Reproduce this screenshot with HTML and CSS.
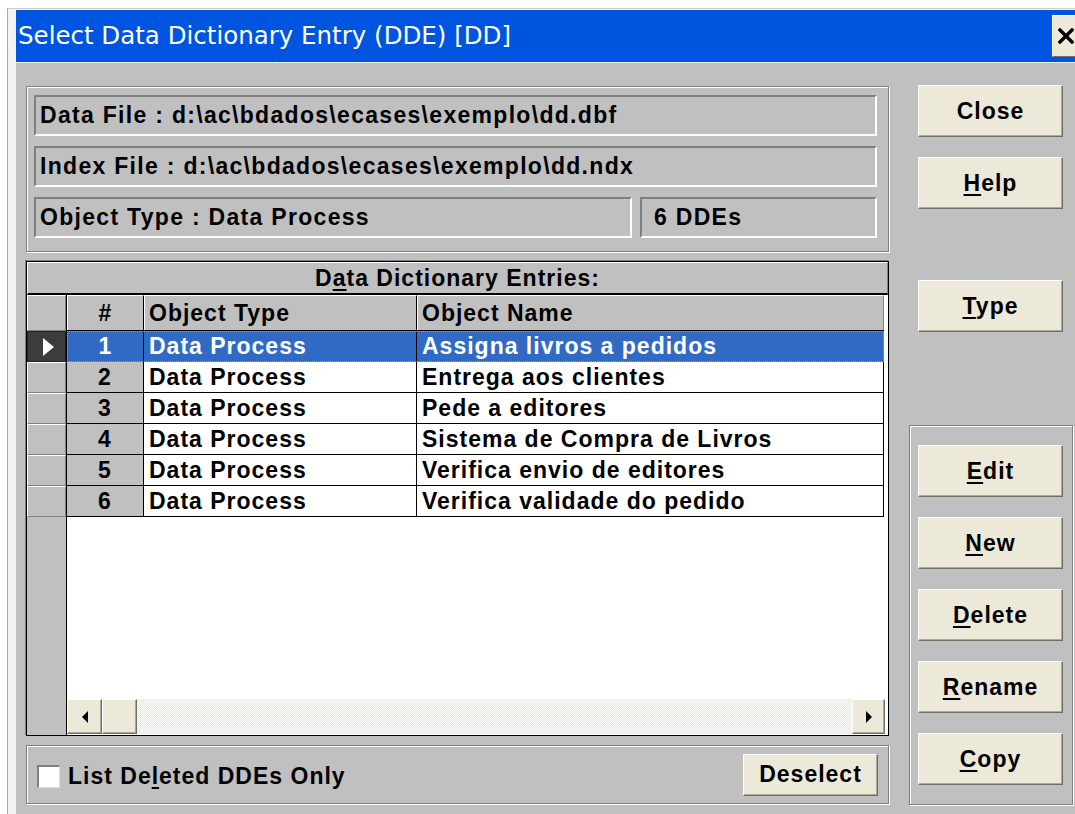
FILE: index.html
```html
<!DOCTYPE html>
<html lang="en">
<head>
<meta charset="utf-8">
<title>Select Data Dictionary Entry (DDE) [DD]</title>
<link rel="stylesheet" href="styles.css">
</head>
<body>
<div class="window">
  <div class="titlebar">
    <span class="title">Select Data Dictionary Entry (DDE) [DD]</span>
    <button class="xbtn" aria-label="Close">
      <svg width="16" height="16" viewBox="0 0 16 16"><path d="M2 2 L14 14 M14 2 L2 14" stroke="#000" stroke-width="3.4" stroke-linecap="square"/></svg>
    </button>
  </div>
  <div class="client">
    <div class="left">
      <div class="group info">
        <div class="field">Data File : d:\ac\bdados\ecases\exemplo\dd.dbf</div>
        <div class="field">Index File : d:\ac\bdados\ecases\exemplo\dd.ndx</div>
        <div class="field-row">
          <div class="field objtype">Object Type : Data Process</div>
          <div class="field count">6 DDEs</div>
        </div>
      </div>

      <div class="grid">
        <div class="caption"><span>D<u>a</u>ta Dictionary Entries:</span></div>
        <div class="gbody">
          <div class="indcol">
            <div class="ind ind-head"></div>
            <div class="ind current"><span class="arrow"></span></div>
            <div class="ind"></div>
            <div class="ind"></div>
            <div class="ind"></div>
            <div class="ind"></div>
            <div class="ind"></div>
          </div>
          <div class="gdata">
            <div class="hrow">
              <div class="hc c-num">#</div>
              <div class="hc c-type">Object Type</div>
              <div class="hc c-name">Object Name</div>
            </div>
            <div class="row selected">
              <div class="c c-num">1</div>
              <div class="c c-type">Data Process</div>
              <div class="c c-name">Assigna livros a pedidos</div>
            </div>
            <div class="row">
              <div class="c c-num">2</div>
              <div class="c c-type">Data Process</div>
              <div class="c c-name">Entrega aos clientes</div>
            </div>
            <div class="row">
              <div class="c c-num">3</div>
              <div class="c c-type">Data Process</div>
              <div class="c c-name">Pede a editores</div>
            </div>
            <div class="row">
              <div class="c c-num">4</div>
              <div class="c c-type">Data Process</div>
              <div class="c c-name">Sistema de Compra de Livros</div>
            </div>
            <div class="row">
              <div class="c c-num">5</div>
              <div class="c c-type">Data Process</div>
              <div class="c c-name">Verifica envio de editores</div>
            </div>
            <div class="row">
              <div class="c c-num">6</div>
              <div class="c c-type">Data Process</div>
              <div class="c c-name">Verifica validade do pedido</div>
            </div>
            <div class="filler"></div>
            <div class="hscroll">
              <div class="sbtn"><span class="tri-left"></span></div>
              <div class="sthumb"></div>
              <div class="strack"></div>
              <div class="sbtn sbtn-r"><span class="tri-right"></span></div>
            </div>
          </div>
        </div>
      </div>

      <div class="group bottom">
        <label class="check"><span class="box"></span><span class="label-text">List De<u>l</u>eted DDEs Only</span></label>
        <button class="btn deselect">Deselect</button>
      </div>
    </div>

    <div class="right">
      <button class="btn side b-close">Close</button>
      <button class="btn side b-help"><span><u>H</u>elp</span></button>
      <button class="btn side b-type"><span><u>T</u>ype</span></button>
      <div class="group actions">
        <button class="btn side"><span><u>E</u>dit</span></button>
        <button class="btn side"><span><u>N</u>ew</span></button>
        <button class="btn side"><span><u>D</u>elete</span></button>
        <button class="btn side"><span><u>R</u>ename</span></button>
        <button class="btn side"><span><u>C</u>opy</span></button>
      </div>
    </div>
  </div>
</div>
</body>
</html>
```

FILE: styles.css
```css
* { box-sizing: border-box; }

html, body {
  margin: 0;
  padding: 0;
  width: 1075px;
  height: 814px;
  overflow: hidden;
  background: #fff;
}

body {
  font-family: "Liberation Sans", Arial, sans-serif;
  font-weight: bold;
  font-size: 23px;
  letter-spacing: 1px;
  color: #000;
}

u { text-decoration-thickness: 2px; text-underline-offset: 3px; }

/* ---- window frame ---- */
.window {
  margin: 8px 0 0 7px;
  width: 1080px;
  height: 806px;
  border-left: 1px solid #a9a9a9;
  border-top: 1px solid #cfcfcf;
  background: #f3f3f3;
  padding: 1px 0 0 8px;
  display: flex;
  flex-direction: column;
}

.titlebar {
  height: 53px;
  background: #0055e0;
  border-bottom: 1px solid #e8eefc;
  display: flex;
  align-items: center;
  padding-left: 2px;
}

.title {
  font-family: "DejaVu Sans", "Liberation Sans", sans-serif;
  font-weight: normal;
  font-size: 24.5px;
  letter-spacing: 0;
  color: #fff;
  margin-top: -1px;
}

.xbtn {
  margin-left: auto;
  margin-right: 5px;
  width: 30px;
  height: 42px;
  background: #ece9d8;
  border: 1px solid #fff;
  border-right-color: #716f64;
  border-bottom-color: #716f64;
  padding: 0 0 0 5px;
  display: flex;
  align-items: center;
  justify-content: flex-start;
}

/* ---- client area ---- */
.client {
  flex: 1;
  background: #c0c0c0;
  display: flex;
  padding: 22px 0 0 10px;
}

.left {
  width: 863px;
  display: flex;
  flex-direction: column;
}

.right {
  margin-left: 20px;
  width: 164px;
  display: flex;
  flex-direction: column;
}

/* etched group frame */
.group {
  border: 1px solid #808080;
  box-shadow: inset 1px 1px 0 #fff, 1px 1px 0 #fff;
}

.info {
  margin-top: 1px;
  height: 166px;
  padding: 8px 11px 0 7px;
  display: flex;
  flex-direction: column;
  gap: 10px;
}

.field {
  height: 41px;
  border-top: 2px solid #808080;
  border-left: 2px solid #808080;
  border-bottom: 2px solid #fff;
  border-right: 2px solid #fff;
  padding-left: 4px;
  display: flex;
  align-items: center;
  white-space: nowrap;
  letter-spacing: 1.3px;
}

.field-row {
  display: flex;
  gap: 8px;
}

.objtype { width: 598px; }
.count { flex: 1; padding-left: 12px; }

/* ---- data grid ---- */
.grid {
  margin-top: 9px;
  height: 475px;
  border: 1px solid #000;
  box-shadow: -1px -1px 0 #808080;
  display: flex;
  flex-direction: column;
  background: #fff;
}

.caption {
  height: 33px;
  background: #c0c0c0;
  border-top: 1px solid #fff;
  border-left: 1px solid #fff;
  border-right: 1px solid #808080;
  border-bottom: 2px solid #000;
  display: flex;
  align-items: center;
  justify-content: center;
  flex-shrink: 0;
}

.gbody {
  flex: 1;
  display: flex;
  min-height: 0;
}

.indcol {
  width: 39px;
  background: #c0c0c0;
  display: flex;
  flex-direction: column;
}

.ind {
  height: 31px;
  border-top: 1px solid #fff;
  border-left: 1px solid #fff;
  border-bottom: 1px solid #808080;
  border-right: 1px solid #808080;
  background: #c0c0c0;
}

.ind-head { height: 36px; }

.ind.current {
  background: #3c3c3c;
  border-color: #202020;
  display: flex;
  align-items: center;
  justify-content: center;
}

.arrow {
  width: 0;
  height: 0;
  border-top: 9px solid transparent;
  border-bottom: 9px solid transparent;
  border-left: 11px solid #fff;
  margin-left: 4px;
}

.gdata {
  flex: 1;
  border-left: 1px solid #000;
  display: flex;
  flex-direction: column;
  background: #fff;
}

.hrow, .row {
  display: flex;
  flex-shrink: 0;
}

.hrow {
  height: 36px;
  border-bottom: 1px solid #000;
  background: #c0c0c0;
  width: 817px;
}

.hc {
  border-top: 1px solid #fff;
  border-left: 1px solid #fff;
  border-right: 1px solid #000;
  display: flex;
  align-items: center;
  padding-left: 4px;
  white-space: nowrap;
}

.row { height: 31px; }

.c {
  border-right: 1px solid #000;
  border-bottom: 1px solid #000;
  display: flex;
  align-items: center;
  padding-left: 5px;
  white-space: nowrap;
}

.c-num { width: 77px; justify-content: center; padding-left: 0; }
.c-type { width: 273px; }
.c-name { width: 467px; }

.hc.c-name { border-right: 1px solid #808080; }

.row .c-num { background: #c0c0c0; }

.row.selected .c {
  background: #316ac5;
  color: #fff;
  border-top: 1px dotted #d09a3c;
  border-bottom: 1px dotted #d09a3c;
}
.row.selected .c-num { border-left: 1px dotted #d09a3c; }
.row.selected .c-name { border-right: 1px dotted #d09a3c; }

.filler { flex: 1; }

.hscroll {
  height: 36px;
  display: flex;
  flex-shrink: 0;
  border-bottom: 1px solid #fff;
}

.sbtn, .sthumb {
  width: 35px;
  background: #ece9d8;
  border-top: 1px solid #fff;
  border-left: 1px solid #fff;
  border-bottom: 1px solid #716f64;
  border-right: 1px solid #716f64;
  box-shadow: inset -1px -1px 0 #aca899;
  display: flex;
  align-items: center;
  justify-content: center;
}

.sbtn-r { width: 33px; margin-right: 3px; }

.strack {
  flex: 1;
  background-color: #fbfbf8;
  background-image: repeating-conic-gradient(#ece9d8 0 25%, #fbfbf8 0 50%);
  background-size: 2px 2px;
}

.tri-left, .tri-right {
  width: 0;
  height: 0;
  border-top: 6px solid transparent;
  border-bottom: 6px solid transparent;
}
.tri-left { border-right: 6px solid #000; }
.tri-right { border-left: 6px solid #000; }

/* ---- bottom options ---- */
.bottom {
  margin-top: 9px;
  height: 59px;
  display: flex;
  align-items: center;
  padding: 0 10px 0 10px;
}

.check {
  display: flex;
  align-items: center;
  gap: 8px;
  margin-top: 4px;
}

.box {
  width: 23px;
  height: 23px;
  background: #fff;
  border-top: 2px solid #808080;
  border-left: 2px solid #808080;
  border-bottom: 1px solid #dcdcdc;
  border-right: 1px solid #dcdcdc;
}

/* ---- push buttons ---- */
.btn {
  font: inherit;
  letter-spacing: inherit;
  color: #000;
  background: #ece9d8;
  border-top: 1px solid #fff;
  border-left: 1px solid #fff;
  border-bottom: 1px solid #716f64;
  border-right: 1px solid #716f64;
  box-shadow: inset -1px -1px 0 #aca899;
  padding: 0;
  display: flex;
  align-items: center;
  justify-content: center;
}

.deselect {
  margin-left: auto;
  width: 135px;
  height: 42px;
}

.side {
  width: 145px;
  height: 52px;
  margin-left: 9px;
  flex-shrink: 0;
}

.b-help { margin-top: 20px; }
.b-type { margin-top: 71px; }

.actions {
  margin-top: 93px;
  height: 380px;
  padding-top: 19px;
  display: flex;
  flex-direction: column;
  gap: 20px;
}

.actions .side { margin-left: 8px; }
```
